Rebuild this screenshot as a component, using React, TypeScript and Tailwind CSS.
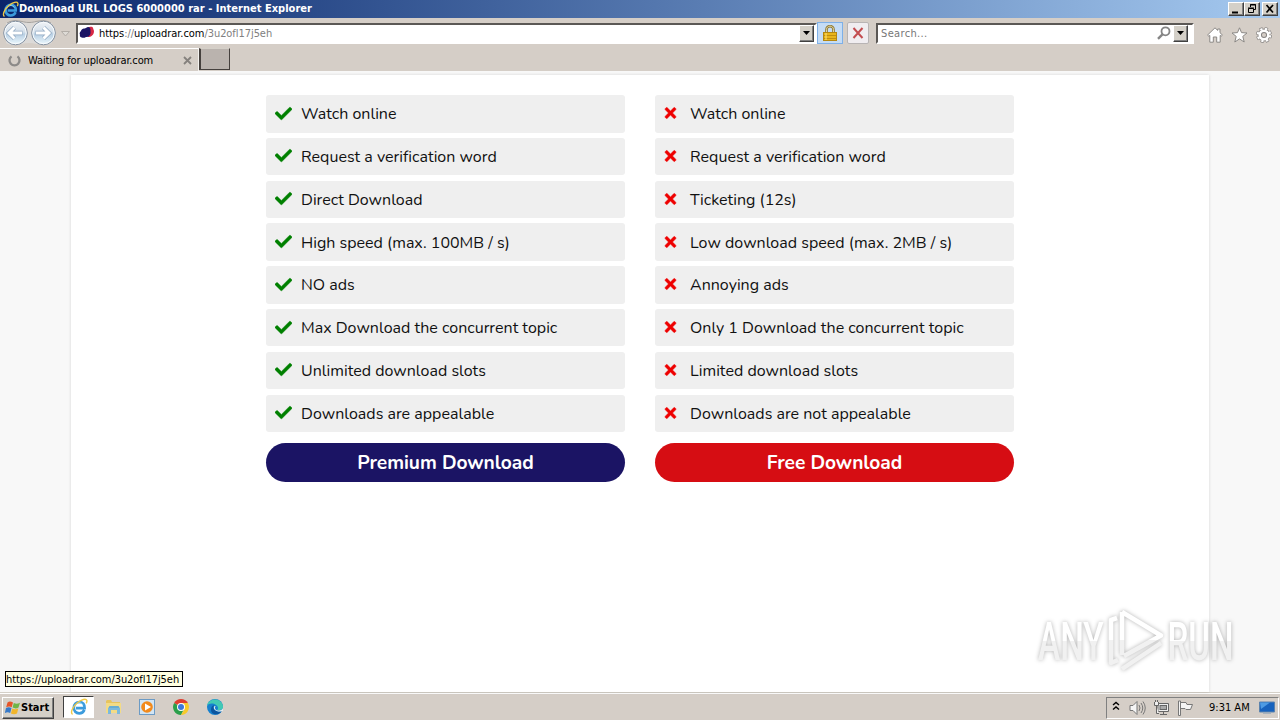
import React from 'react';
import { FaCheck, FaTimes } from 'react-icons/fa';

const premiumFeatures = [
    'Watch online',
    'Request a verification word',
    'Direct Download',
    'High speed (max. 100MB / s)',
    'NO ads',
    'Max Download the concurrent topic',
    'Unlimited download slots',
    'Downloads are appealable',
];

const freeFeatures = [
    'Watch online',
    'Request a verification word',
    'Ticketing (12s)',
    'Low download speed (max. 2MB / s)',
    'Annoying ads',
    'Only 1 Download the concurrent topic',
    'Limited download slots',
    'Downloads are not appealable',
];

const raised = 'bg-[#d4d0c8] border border-t-white border-l-white border-r-[#404040] border-b-[#404040] shadow-[inset_-1px_-1px_0_#808080]';

function IeLogo({ size }: { size: number }) {
    return (
        <svg width={size} height={size} viewBox="0 0 18 18" fill="none" className="shrink-0">
            <path d="M14.4 11.9C13.4 14.2 11.4 15.3 9.2 15.3C6 15.3 3.8 13 3.8 9.8C3.8 6.6 6.1 4 9.4 4C12.8 4 14.8 6.5 14.6 10.1H6" stroke="#3b9bdc" strokeWidth="2.7" />
            <path d="M5 8.2C5.4 4.4 11.4 3.4 13 7" stroke="#8bd4f8" strokeWidth="1" />
            <path d="M2.6 16.4C-.1 14.8 2.8 8.2 7.7 4.5C11.5 1.5 16 .2 16.8 2.3C17.1 3.2 16.7 4.5 16.2 5.4" stroke="#f0c945" strokeWidth="1.4" />
        </svg>
    );
}

function TitleBar() {
    return (
        <div className="flex h-[18px] items-center bg-linear-to-r from-[#0a246a] to-[#a6caf0] pl-[2px] pr-[2px]">
            <IeLogo size={17} />
            <span className="mt-[1px] whitespace-nowrap text-[11px] font-bold tracking-[0.02px] text-white">Download URL LOGS 6000000 rar - Internet Explorer</span>
            <div className="ml-auto flex">
                <div className={`h-[14px] w-[16px] ${raised}`}>
                    <svg width="14" height="12"><path d="M3 9.5H9" stroke="#000" strokeWidth="2" /></svg>
                </div>
                <div className={`mr-[2px] h-[14px] w-[16px] ${raised}`}>
                    <svg width="14" height="12" fill="none" stroke="#000"><path d="M5.5 4V1.5H10.5V6.5H9M5 2H11M3.5 5.5H8.5V9.5H3.5ZM3 5H9" /></svg>
                </div>
                <div className={`h-[14px] w-[16px] ${raised}`}>
                    <svg width="14" height="12"><path d="M3.5 2L10 9.5M10 2L3.5 9.5" stroke="#000" strokeWidth="1.7" /></svg>
                </div>
            </div>
        </div>
    );
}

function NavButtons() {
    return (
        <svg width="74" height="30" viewBox="0 0 74 30" fill="none" className="shrink-0">
            <defs>
                <linearGradient id="nav" x1="0" y1="0" x2="0" y2="1">
                    <stop offset="0" stopColor="#f1f3f6" />
                    <stop offset=".46" stopColor="#d3dfea" />
                    <stop offset=".55" stopColor="#b8cfe3" />
                    <stop offset="1" stopColor="#eefaff" />
                </linearGradient>
            </defs>
            <path d="M6 5C14 0 22 4 29 4C36 4 44 0 52 5V25C44 30 36 25 29 25C22 25 14 30 6 25Z" fill="#dcdad8" />
            <path d="M7 5C15 0 22 4.5 29 4.5C36 4.5 43 0 51 5" stroke="#a5a19d" />
            <circle cx="15.5" cy="15" r="11.8" fill="url(#nav)" stroke="#8390a0" />
            <circle cx="15.5" cy="15" r="10.7" stroke="#f8fbfd" />
            <circle cx="43.5" cy="15" r="11.8" fill="url(#nav)" stroke="#8390a0" />
            <circle cx="43.5" cy="15" r="10.7" stroke="#f8fbfd" />
            <path d="M22.5 15H10M14.5 9.5L9 15L14.5 20.5" stroke="#91a9c2" strokeWidth="4.4" />
            <path d="M22 15H10M14.5 9.5L9 15L14.5 20.5" stroke="#fff" strokeWidth="3" />
            <path d="M35.5 15H48M43.5 9.5L49 15L43.5 20.5" stroke="#91a9c2" strokeWidth="4.4" />
            <path d="M36 15H48M43.5 9.5L49 15L43.5 20.5" stroke="#fff" strokeWidth="3" />
            <path d="M61.5 13.5H69.5L65.5 18Z" fill="#dedbd6" stroke="#b3aea8" />
        </svg>
    );
}

function DropArrow() {
    return (
        <div className={`flex h-[17px] w-[15px] shrink-0 items-center justify-center ${raised}`}>
            <svg width="7" height="4"><path d="M0 0H7L3.5 4Z" fill="#000" /></svg>
        </div>
    );
}

function Toolbar() {
    return (
        <div className="flex h-[30px] items-center">
            <NavButtons />
            <div className="ml-[2px] flex h-[21px] w-[741px] items-center border-2 border-t-[#5b5855] border-l-[#5b5855] border-r-white border-b-white bg-white pr-[1px]">
                <svg width="17" height="14" viewBox="0 0 17 14" className="ml-[1px] shrink-0">
                    <path d="M9 2C11 0 14 1 14 2L15 5C15 9 12 11 9 11Z" fill="#d82845" />
                    <path d="M2 5C3 2 5 3 7 2C9 0 12 1 11.5 5C12 9 10 11 7 11C4 13 0 11 1 9C0 7 1 6 2 5Z" fill="#1b1464" />
                </svg>
                <span className="ml-[3px] mt-[2px] whitespace-nowrap text-[11px] tracking-[-0.06px] text-[#808080]"><span className="text-black">https</span>://<span className="text-black">uploadrar.com</span>/3u2ofl17j5eh</span>
                <div className="ml-auto"><DropArrow /></div>
            </div>
            <div className="flex h-[22px] w-[26px] items-center justify-center border border-[#7eb0e8] bg-[#c5dcf5]">
                <svg width="14" height="17" viewBox="0 0 14 17" fill="none">
                    <path d="M3.5 8V4.5C3.5 0 10.5 0 10.5 4.5V8" stroke="#8d7630" strokeWidth="2.6" />
                    <path d="M3.5 8V4.5C3.5 0 10.5 0 10.5 4.5V8" stroke="#e0d6a2" strokeWidth="1" />
                    <rect x=".5" y="7.5" width="13" height="8" fill="#e8b51c" stroke="#b48711" />
                    <path d="M1 10.5H13M1 13.5H13" stroke="#c18f10" />
                    <path d="M3 8V15" stroke="#ffe57a" />
                </svg>
            </div>
            <div className="ml-[4px] flex h-[22px] w-[22px] items-center justify-center rounded-[2px] border border-[#b8b4b4] bg-[#f0edf0]">
                <svg width="12" height="12" fill="none"><path d="M1.5 1L10.5 11M10.5 1L1.5 11" stroke="#c34d50" strokeWidth="2" /></svg>
            </div>
            <div className="ml-[7px] flex h-[21px] w-[318px] items-center border-2 border-t-[#5b5855] border-l-[#5b5855] border-r-white border-b-white bg-white pr-[4px]">
                <span className="ml-[3px] mt-[2px] text-[11px] tracking-[0.35px] text-[#777]">Search...</span>
                <svg width="14" height="14" viewBox="0 0 14 14" fill="none" stroke="#858585" className="ml-auto mr-[2px]">
                    <circle cx="8.5" cy="5.3" r="4" strokeWidth="1.8" />
                    <path d="M5.7 8.2L1 12.8" strokeWidth="2.4" />
                </svg>
                <DropArrow />
            </div>
            <div className="ml-[13px] mt-[4px] flex gap-[8px]">
                <svg width="16" height="16" viewBox="0 0 16 16" fill="#fff" stroke="#8b8885">
                    <path d="M8 .8L10.7 3.4V2H13V5.7L15.4 8L14.2 9.2L13.2 8.4V15.2H9.7V10H6.3V15.2H2.8V8.4L1.8 9.2L.6 8Z" />
                </svg>
                <svg width="17" height="16" viewBox="0 0 17 16" fill="#fff" stroke="#8b8885">
                    <path d="M8.5 .8L10.5 5.6L16 6L11.8 9.4L13.2 15L8.5 11.9L3.8 15L5.2 9.4L1 6L6.5 5.6Z" />
                </svg>
                <svg width="16" height="16" viewBox="0 0 16 16" fill="none">
                    <circle cx="8" cy="8" r="6.4" stroke="#858280" strokeWidth="3.2" strokeDasharray="3 2.02" />
                    <circle cx="8" cy="8" r="4.3" stroke="#858280" strokeWidth="4.4" />
                    <circle cx="8" cy="8" r="6.2" stroke="#fff" strokeWidth="2.2" strokeDasharray="2.2 2.67" strokeDashoffset="-.3" />
                    <circle cx="8" cy="8" r="4.3" stroke="#fff" strokeWidth="2.5" />
                </svg>
            </div>
        </div>
    );
}

function TabRow() {
    return (
        <div className="flex h-[23px]">
            <div className="flex w-[199px] items-center border-t border-r border-t-white border-r-[#f4f2ef] pl-[8px] pr-[6px]">
                <svg width="13" height="13" viewBox="0 0 13 13" fill="none"><path d="M3.5 2.3A5 5 0 1 0 9.5 2.3" stroke="#8c8a88" strokeWidth="2.3" /></svg>
                <span className="ml-[7px] mt-[2px] whitespace-nowrap text-[11px] tracking-[-0.12px] text-black">Waiting for uploadrar.com</span>
                <svg width="9" height="9" className="ml-auto"><path d="M1 1L8 8M8 1L1 8" stroke="#85817d" strokeWidth="1.8" /></svg>
            </div>
            <div className="h-[22px] w-[31px] border border-l-2 border-t-[#d4d0c8] border-l-[#45403d] border-r-[#45403d] border-b-[#45403d] bg-[#bab3ae]"></div>
        </div>
    );
}

function FeatureColumn({ features, premium }: { features: string[]; premium: boolean }) {
    return (
        <div className="flex w-[359px] flex-col font-['Nunito','Open_Sans',sans-serif]">
            <div className="flex flex-col gap-[5.3px]">
                {features.map((feature) => (
                    <div key={feature} className="flex h-[37.5px] items-center rounded-[3px] bg-[#efefef] pt-[0.9px] pl-[9px]">
                        <span className="mb-[2px] flex w-[26px]">
                            {premium ? <FaCheck className="h-[17px] w-[17px] stroke-[#008000] stroke-[10px] text-[#008000]" /> : <FaTimes className="h-[16px] w-[13px] stroke-[#ee0000] stroke-[14px] text-[#ee0000]" />}
                        </span>
                        <span className="whitespace-nowrap text-[16px] leading-none tracking-[0.01px] text-[#111]">{feature}</span>
                    </div>
                ))}
            </div>
            <button className={`mt-[10.5px] flex h-[39.6px] items-center justify-center rounded-full pt-[0.5px] text-[19.2px] leading-[28px] font-bold tracking-[-0.04px] text-white ${premium ? 'bg-[#1b1464]' : 'bg-[#d60d13]'}`}>
                {premium ? 'Premium Download' : 'Free Download'}
            </button>
        </div>
    );
}

function Watermark() {
    return (
        <svg width="250" height="86" viewBox="1030 597 250 86" className="absolute top-[526px] left-[1030px] overflow-visible drop-shadow-[0_0_2px_rgba(0,0,0,0.3)]">
            <defs>
                <linearGradient id="mark" x1="0" y1="620" x2="0" y2="660" gradientUnits="userSpaceOnUse">
                    <stop offset=".5" stopColor="#fff" />
                    <stop offset=".51" stopColor="#f1f1f1" />
                </linearGradient>
                <linearGradient id="letters" x1="0" y1="-38" x2="0" y2="0" gradientUnits="userSpaceOnUse">
                    <stop offset=".5" stopColor="#fff" />
                    <stop offset=".51" stopColor="#f1f1f1" />
                </linearGradient>
            </defs>
            <g fill="url(#letters)" fontFamily="Roboto" fontSize="53" fontWeight="500">
                <text transform="translate(1038 660) scale(.63 1)">ANY</text>
                <text transform="translate(1167.5 660) scale(.625 1)">RUN</text>
            </g>
            <g fill="none" stroke="url(#mark)" strokeWidth="4.5" strokeLinejoin="round">
                <path d="M1122 612V655M1122 612L1161 635.5L1124 656" />
                <path d="M1117 618L1111 620V663L1118 660M1122 669L1161 643" />
            </g>
        </svg>
    );
}

function Taskbar() {
    return (
        <div className="flex h-[28px] items-center border-t border-[#d4d0c8] shadow-[inset_0_1px_0_#fff]">
            <div className={`ml-[2px] mt-[2px] flex h-[22px] w-[52px] items-center pl-[2px] ${raised}`}>
                <svg width="16" height="16" viewBox="0 0 16 16">
                    <path d="M2.5 2.5C4.5 1 6 1.5 8 2.5L6.7 7.3C5 6.2 3.5 6 1.2 7.2Z" fill="#e65529" />
                    <path d="M8.8 3C11 4 12.5 4 15 2.8L13.5 7.6C11.5 8.8 9.6 8.6 7.6 7.6Z" fill="#6fb545" />
                    <path d="M1 8.1C3 7 4.8 7.2 6.5 8.1L5.2 13C3.4 12 1.7 12 -.2 13Z" fill="#3679c9" />
                    <path d="M7.3 8.5C9.3 9.6 11.4 9.5 13.3 8.5L12 13.4C10 14.5 7.8 14.3 5.9 13.4Z" fill="#f1b62c" />
                </svg>
                <span className="mt-[1px] text-[11px] font-bold text-black">Start</span>
            </div>
            <div className="ml-[9px] mt-[1px] flex h-[22px] w-[31px] items-center justify-center border border-t-[#404040] border-l-[#404040] border-r-white border-b-white bg-white">
                <IeLogo size={18} />
            </div>
            <svg width="17" height="16" viewBox="0 0 17 16" className="ml-[11px]">
                <path d="M1 2L2 1H6L7 3H15V6H1Z" fill="#e7c45e" />
                <rect x="1" y="4" width="15" height="10" fill="#f3db86" />
                <path d="M3 15V9L5 7H13L15 9V15H12V11H6V15Z" fill="#7cb9dd" />
                <path d="M4 8H14" stroke="#54a0c8" />
            </svg>
            <svg width="16" height="16" viewBox="0 0 16 16" className="ml-[17px]">
                <rect x=".5" y=".5" width="15" height="15" fill="#d2e5f4" stroke="#6c9bc5" />
                <circle cx="8" cy="8" r="5.8" fill="#f28a1c" />
                <path d="M6 4.5L12 8L6 11.5Z" fill="#fff" />
            </svg>
            <svg width="16" height="16" viewBox="0 0 16 16" className="ml-[18px]">
                <path d="M8 8L1.1 4A8 8 0 0 1 14.9 4Z" fill="#df3e30" />
                <path d="M8 8L1.1 4A8 8 0 0 0 8 16L11 10Z" fill="#2b9f4b" />
                <path d="M8 4H14.9A8 8 0 0 1 8 16L11.5 10Z" fill="#f7ca2a" />
                <circle cx="8" cy="8" r="4" fill="#fff" />
                <circle cx="8" cy="8" r="3" fill="#3d78da" />
            </svg>
            <svg width="16" height="16" viewBox="0 0 16 16" className="ml-[18px]">
                <circle cx="8" cy="8" r="8" fill="#1680ce" />
                <path d="M0 7C1-1 14-2 16 7C16.5 10 14 11.5 10 11C11 10 12 8 9 6C6 4 2 4 0 7Z" fill="#42c9b4" />
                <path d="M7 6C5 10 9 14 14.5 12.5C11 17 4 16 4 11C4 8 5 7 7 6Z" fill="#0c559f" />
                <path d="M9 7.2C7.2 7.8 8 10.7 10 11.3C13 12 15.5 11 16 9V12L14.5 12.3C10 13.5 5 10 7.5 7Z" fill="#e2ebee" />
            </svg>
            <div className="ml-auto mt-[2px] mr-[1px] flex h-[22px] w-[173px] items-center border border-t-[#808080] border-l-[#808080] border-r-white border-b-white pl-[5px]">
                <svg width="8" height="10" fill="none" stroke="#000" strokeWidth="1.4" className="mb-[3px]"><path d="M1 4L4 1.5L7 4M1 8.5L4 6L7 8.5" /></svg>
                <svg width="17" height="16" viewBox="0 0 17 16" fill="#f5f5f5" stroke="#777" className="ml-[9px]">
                    <path d="M1 5.5H4L8 1.5V14.5L4 10.5H1Z" />
                    <path d="M10 5Q12 8 10 11M12 3Q15.5 8 12 13M14 1.5Q18.5 8 14 14.5" fill="none" />
                </svg>
                <svg width="17" height="16" viewBox="0 0 17 16" fill="#eee" stroke="#666" className="ml-[7px]">
                    <path d="M5 3.5H15.5V11.5H5ZM7 14.5H14M10.5 12V14" />
                    <rect x="7" y="5.5" width="6.5" height="4" fill="#aaa" />
                    <path d="M1.5 2V5.5H5.5V2M2.5 2V0M4.5 2V0M3.5 6V13.5H6" />
                </svg>
                <svg width="17" height="16" viewBox="0 0 17 16" fill="#f4f4f4" stroke="#777" className="ml-[7px]">
                    <path d="M1.5 1V15.5H3.5V1ZM3.5 2.5H9L10 4.5H15.5L13.5 9.5H9L8 8.5H3.5Z" />
                </svg>
                <span className="ml-[15px] mt-[1px] whitespace-nowrap text-[11px] text-black">9:31 AM</span>
                <svg width="16" height="14" viewBox="0 0 16 14" className="ml-auto mr-[3px]">
                    <path d="M.5 1H15.5V11H.5Z" fill="#1762bd" stroke="#5c83ad" />
                    <path d="M1 1.5H11L2 8Z" fill="#4d9be4" />
                    <path d="M4 12.5H12" stroke="#a7b2bd" />
                </svg>
            </div>
        </div>
    );
}

export default function App() {
    return (
        <div className="flex h-[720px] w-[1280px] flex-col overflow-hidden bg-[#d5cec7] font-['Tahoma','DejaVu_Sans_Condensed','DejaVu_Sans',sans-serif]">
            <TitleBar />
            <Toolbar />
            <TabRow />
            <div className="relative flex h-[621px] justify-center bg-[#f8f8f8] pt-[4px]">
                <div className="flex w-[1138px] justify-center gap-[30px] bg-white pt-[20px] shadow-[0_0_3px_rgba(0,0,0,0.14)]">
                    <FeatureColumn features={premiumFeatures} premium />
                    <FeatureColumn features={freeFeatures} premium={false} />
                </div>
                <Watermark />
                <div className="absolute top-[600px] left-[5px] flex h-[16px] w-[178px] items-center border border-black bg-[#ffffe1] pt-[2px]">
                    <span className="whitespace-nowrap text-[11px] tracking-[-0.06px] text-black">https://uploadrar.com/3u2ofl17j5eh</span>
                </div>
            </div>
            <Taskbar />
        </div>
    );
}
